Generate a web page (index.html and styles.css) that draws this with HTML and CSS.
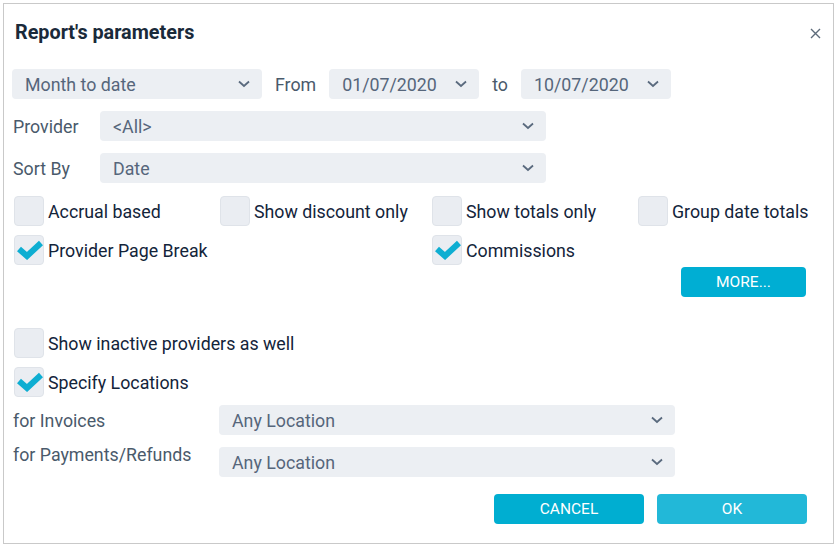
FILE: index.html
```html
<!DOCTYPE html>
<html>
  <head>
    <title>Report's parameters</title>
    <meta name="viewport" content="width=device-width,initial-scale=1">
    <link rel="stylesheet" href="styles.css">
  </head>
  <body>
    <div class="dialog">
      <div class="dialog-header">
        <h2 class="dialog-title">Report's parameters</h2>
        <button class="close-btn" title="Close">
          <svg width="11" height="11" viewBox="0 0 11 11"><path d="M1 1 L10 10 M10 1 L1 10" stroke="#5d6b7a" stroke-width="1.4" fill="none"/></svg>
        </button>
      </div>

      <div class="dialog-body">
        <div class="row range-row">
          <div class="select select-period"><span>Month to date</span><svg class="chevron" viewBox="0 0 12 8"><path d="M1 1.5 L6 6 L11 1.5" /></svg></div>
          <span class="range-label">From</span>
          <div class="select select-date"><span>01/07/2020</span><svg class="chevron" viewBox="0 0 12 8"><path d="M1 1.5 L6 6 L11 1.5" /></svg></div>
          <span class="range-label">to</span>
          <div class="select select-date"><span>10/07/2020</span><svg class="chevron" viewBox="0 0 12 8"><path d="M1 1.5 L6 6 L11 1.5" /></svg></div>
        </div>

        <div class="row field-row">
          <span class="field-label label-short">Provider</span>
          <div class="select select-wide"><span>&lt;All&gt;</span><svg class="chevron" viewBox="0 0 12 8"><path d="M1 1.5 L6 6 L11 1.5" /></svg></div>
        </div>

        <div class="row field-row">
          <span class="field-label label-short">Sort By</span>
          <div class="select select-wide"><span>Date</span><svg class="chevron" viewBox="0 0 12 8"><path d="M1 1.5 L6 6 L11 1.5" /></svg></div>
        </div>

        <div class="check-grid first-checks">
          <label class="check"><span class="box"></span>Accrual based</label>
          <label class="check"><span class="box"></span>Show discount only</label>
          <label class="check"><span class="box"></span>Show totals only</label>
          <label class="check"><span class="box"></span>Group date totals</label>
          <label class="check"><span class="box checked"><svg viewBox="0 0 28 20"><path d="M4 9 L12 16 L26 3" /></svg></span>Provider Page Break</label>
          <span></span>
          <label class="check"><span class="box checked"><svg viewBox="0 0 28 20"><path d="M4 9 L12 16 L26 3" /></svg></span>Commissions</label>
        </div>

        <div class="more-row">
          <button class="btn btn-more">MORE...</button>
        </div>

        <div class="check-list">
          <label class="check"><span class="box"></span>Show inactive providers as well</label>
          <label class="check"><span class="box checked"><svg viewBox="0 0 28 20"><path d="M4 9 L12 16 L26 3" /></svg></span>Specify Locations</label>
        </div>

        <div class="row location-row">
          <span class="field-label label-long">for Invoices</span>
          <div class="select select-location"><span>Any Location</span><svg class="chevron" viewBox="0 0 12 8"><path d="M1 1.5 L6 6 L11 1.5" /></svg></div>
        </div>
        <div class="row location-row top-aligned">
          <span class="field-label label-long">for Payments/Refunds</span>
          <div class="select select-location"><span>Any Location</span><svg class="chevron" viewBox="0 0 12 8"><path d="M1 1.5 L6 6 L11 1.5" /></svg></div>
        </div>

        <div class="dialog-footer">
          <button class="btn btn-cancel">CANCEL</button>
          <button class="btn btn-ok">OK</button>
        </div>
      </div>
    </div>
  </body>
</html>
```

FILE: styles.css
```css
body {
  margin: 0;
  background: #ffffff;
  font-family: Roboto, "Liberation Sans", Arial, sans-serif;
  font-size: 17.8px;
  color: #13243a;
}

.dialog {
  box-sizing: border-box;
  margin: 3px;
  width: 831px;
  height: 541px;
  border: 1px solid #c9c9c9;
  background: #fff;
}

.dialog-header {
  display: flex;
  justify-content: space-between;
  align-items: center;
  padding: 17px 12px 0 11px;
  height: 24px;
}

.dialog-title {
  margin: 0;
  font-size: 19.8px;
  font-weight: 700;
  line-height: 24px;
  color: #1a2a3a;
}

.close-btn {
  border: 0;
  background: none;
  padding: 0;
  width: 11px;
  height: 11px;
  display: flex;
}

.dialog-body {
  padding: 24px 8px 0 8px;
}

.row {
  display: flex;
  align-items: center;
}

.range-row {
  gap: 13px;
  height: 30px;
}

.range-label {
  color: #4a5a6b;
}

.field-row {
  margin-top: 12px;
  height: 30px;
}

.field-label {
  color: #4a5a6b;
  padding-left: 1px;
}

.label-short {
  width: 87px;
}

.label-long {
  width: 206px;
}

.select {
  box-sizing: border-box;
  height: 30px;
  display: flex;
  align-items: center;
  justify-content: space-between;
  padding: 0 12px 0 13px;
  background: #eceff3;
  border-radius: 4px;
  color: #56667b;
}

.select-period {
  width: 250px;
}

.select-date {
  width: 150px;
}

.select-wide {
  width: 446px;
}

.select-location {
  width: 456px;
}

.chevron {
  width: 12px;
  height: 8px;
  fill: none;
  stroke: #5a6a7e;
  stroke-width: 1.8;
}

.check-grid {
  display: grid;
  grid-template-columns: 206px 212px 206px auto;
  row-gap: 9px;
  margin: 13px 0 0 2px;
}

.check {
  display: flex;
  align-items: center;
  gap: 4px;
  height: 30px;
  color: #13243a;
}

.box {
  box-sizing: border-box;
  width: 30px;
  height: 30px;
  border: 1px solid #dfe3e9;
  border-radius: 4px;
  background: #eaedf2;
  display: flex;
  align-items: center;
  justify-content: center;
}

.box svg {
  width: 28px;
  height: 20px;
  fill: none;
  stroke: #0eaed2;
  stroke-width: 6;
}

.more-row {
  display: flex;
  justify-content: flex-end;
  margin-top: 2px;
  padding-right: 19px;
}

.btn {
  border: 0;
  border-radius: 4px;
  color: #fff;
  font-family: Roboto, "Liberation Sans", Arial, sans-serif;
  font-size: 15.5px;
  font-weight: 400;
  height: 30px;
  padding: 0;
}

.btn-more {
  width: 125px;
  background: #00aed3;
}

.check-list {
  display: flex;
  flex-direction: column;
  gap: 9px;
  margin: 31px 0 0 2px;
}

.location-row {
  margin-top: 8px;
  height: 30px;
}

.location-row.top-aligned {
  margin-top: 12px;
  align-items: flex-start;
}

.top-aligned .field-label {
  line-height: 18px;
  margin-top: -1px;
}

.dialog-footer {
  display: flex;
  justify-content: flex-end;
  gap: 13px;
  margin-top: 17px;
  padding-right: 18px;
}

.btn-cancel {
  width: 150px;
  background: #00aed1;
}

.btn-ok {
  width: 150px;
  background: #22b8d8;
}
```
